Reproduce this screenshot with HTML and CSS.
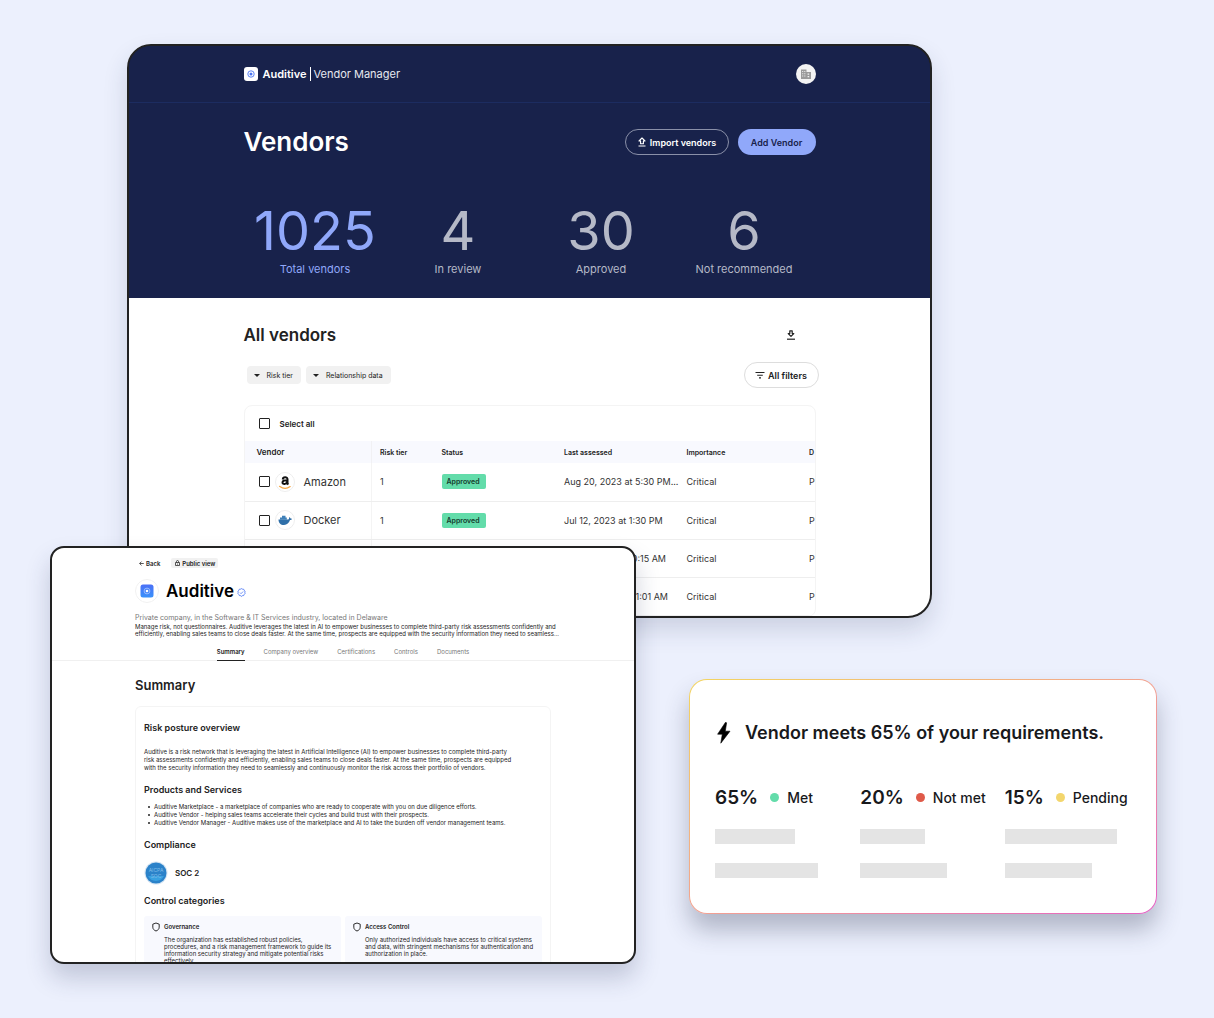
FILE: index.html
```html
<!DOCTYPE html>
<html lang="en">
<head>
<meta charset="utf-8">
<title>Auditive Vendor Manager</title>
<link rel="stylesheet" href="styles.css">
</head>
<body>
<main class="stage">
  <section class="window manager">
    <div class="hero">
      <header class="topbar">
        <div class="wrap topbar-row">
          <svg class="brand-logo" viewBox="0 0 14 14" aria-hidden="true"><rect width="14" height="14" rx="3" fill="#fff"/><circle cx="7" cy="7" r="3.200" fill="none" stroke="#5b83f5" stroke-width="1"/><circle cx="7" cy="7" r="1.500" fill="#4a74f0"/></svg>
          <span class="brand">Auditive</span>
          <span class="product">Vendor Manager</span>
          <button class="avatar" aria-label="Account"><svg viewBox="0 0 12 12" aria-hidden="true"><path fill="#9a9a9a" d="M1 1.500h5.500V4H11v7H1z"/><path fill="#f3f3f3" d="M2.200 3h1v1h-1zM4.300 3h1v1h-1zM2.200 5.200h1v1h-1zM4.300 5.200h1v1h-1zM2.200 7.500h1v1h-1zM4.300 7.500h1v1h-1zM7.600 5.600h1.600v1.200H7.600zM7.600 8h1.600v1.200H7.600z"/></svg></button>
        </div>
      </header>
      <div class="wrap title-row">
        <h1 class="page-title">Vendors</h1>
        <button class="btn btn-outline"><svg viewBox="0 0 10 10" aria-hidden="true"><path d="M5 1 8 4H6.400V6.800H3.600V4H2Z" fill="none" stroke="#fff" stroke-width="1.100" stroke-linejoin="round"/><path d="M1.500 9h7" stroke="#fff" stroke-width="1.200"/></svg>Import vendors</button>
        <button class="btn btn-primary">Add Vendor</button>
      </div>
      <dl class="wrap stats">
        <div class="stat active"><dd>1025</dd><dt>Total vendors</dt></div>
        <div class="stat"><dd>4</dd><dt>In review</dt></div>
        <div class="stat"><dd>30</dd><dt>Approved</dt></div>
        <div class="stat"><dd>6</dd><dt>Not recommended</dt></div>
      </dl>
    </div>
    <div class="wrap listing">
      <div class="listing-head">
        <h2 class="listing-title">All vendors</h2>
        <button class="icon-btn" aria-label="Download"><svg viewBox="0 0 10 10" aria-hidden="true"><path d="M5 6.400 7.800 3.600H6.200V.8H3.800V3.600H2.200Z" fill="none" stroke="#222" stroke-width="1.200" stroke-linejoin="round"/><path d="M1 9.200h8" stroke="#222" stroke-width="1.200"/></svg></button>
      </div>
      <div class="filters">
        <button class="chip"><i class="caret"></i>Risk tier</button>
        <button class="chip"><i class="caret"></i>Relationship data</button>
        <button class="btn btn-filter"><svg viewBox="0 0 10 10" aria-hidden="true"><path d="M.5 2.500h9M2.200 5.200h5.600M4 7.900h2" stroke="#222" stroke-width="1.100"/></svg>All filters</button>
      </div>
      <div class="table-card">
        <label class="select-all"><input type="checkbox" class="tick">Select all</label>
        <table class="vendors">
          <colgroup><col class="c-vendor"><col class="c-risk"><col class="c-mid"><col class="c-mid"><col class="c-mid"><col class="c-mid"></colgroup>
          <thead><tr><th>Vendor</th><th>Risk tier</th><th>Status</th><th>Last assessed</th><th>Importance</th><th>D</th></tr></thead>
          <tbody>
            <tr>
              <td><label class="vendor"><input type="checkbox" class="tick"><svg class="vendor-logo" viewBox="0 0 20 20" aria-hidden="true"><circle cx="10" cy="10" r="9.500" fill="#fff" stroke="#eee"/><path d="M7.800 7.500c.1-3 4.700-2.900 4.700-.3v4.200l.9 1.100M12 8.200c-2.500 0-4.500.4-4.500 2.300 0 2.300 4 2 4.500-.6" fill="none" stroke="#111" stroke-width="2"/><path d="M4.500 14.300c3.500 2.600 7.500 2.600 10.700.3" fill="none" stroke="#f7a845" stroke-width="1.200" stroke-linecap="round"/></svg>Amazon</label></td>
              <td>1</td><td><span class="badge">Approved</span></td><td>Aug 20, 2023 at 5:30 PM...</td><td>Critical</td><td>P</td>
            </tr>
            <tr>
              <td><label class="vendor"><input type="checkbox" class="tick"><svg class="vendor-logo" viewBox="0 0 20 20" aria-hidden="true"><circle cx="10" cy="10" r="9.500" fill="#fff" stroke="#eee"/><path d="M3.500 9.500h9.700c.8-.2 1-.8.900-1.700l.5-.8 1 1.500 1.400.3c-.3 1-1 1.300-2 1.300-1 3-3 4.900-6 4.900-3.500 0-5.500-2-5.500-5.500z" fill="#2f6fa8"/><path d="M5 7.600h6.800v2.100H5zM7 5.800h3.500v2H7z" fill="#3f80b8"/></svg>Docker</label></td>
              <td>1</td><td><span class="badge">Approved</span></td><td>Jul 12, 2023 at 1:30 PM</td><td>Critical</td><td>P</td>
            </tr>
            <tr><td></td><td></td><td></td><td>Jun 9, 2023 at 10:15 AM</td><td>Critical</td><td>P</td></tr>
            <tr><td></td><td></td><td></td><td>Jun 21, 2023 at 11:01 AM</td><td>Critical</td><td>P</td></tr>
          </tbody>
        </table>
      </div>
    </div>
  </section>

  <section class="window profile">
    <div class="column">
      <div class="crumbs">
        <a class="back" href="#"><svg viewBox="0 0 10 10" aria-hidden="true"><path d="M9.500 5h-8M5 1.200 1.200 5 5 8.800" fill="none" stroke="#222" stroke-width="1.500"/></svg>Back</a>
        <button class="public"><svg viewBox="0 0 10 12" aria-hidden="true"><path d="M1 5h8v6H1zM3 5V3a2 2 0 0 1 4 0v2" fill="none" stroke="#222" stroke-width="1.500"/><circle cx="5" cy="8" r="1" fill="#222"/></svg>Public view</button>
      </div>
      <div class="identity">
        <svg class="company-logo" viewBox="0 0 24 24" aria-hidden="true"><defs><linearGradient id="tile" x2="0" y2="1"><stop stop-color="#4a6ff6"/><stop offset="1" stop-color="#3a92fa"/></linearGradient></defs><circle cx="12" cy="12" r="11.500" fill="#fff" stroke="#f1f1f1"/><rect x="5.500" y="5.500" width="13" height="13" rx="2.500" fill="url(#tile)"/><circle cx="12" cy="12" r="2.900" fill="none" stroke="#9fc1ff" stroke-width=".9"/><circle cx="12" cy="12" r="1.300" fill="#fff"/></svg>
        <h1 class="company-name">Auditive</h1>
        <svg class="verified" viewBox="0 0 10 10" aria-hidden="true"><path d="m5 .7 1.100.6 1.300.1.600 1.100.9 1-.2 1.500.2 1.300-.9.900-.6 1.200-1.300.1L5 9.300l-1.100-.8-1.300-.1L2 7.200l-.9-.9L1.300 5l-.2-1.500.9-1 .6-1.100 1.300-.1z" fill="none" stroke="#4f79f5" stroke-width="1"/><path d="M3.300 5.100 4.500 6.300 6.800 3.900" fill="none" stroke="#4f79f5" stroke-width=".9"/></svg>
      </div>
      <p class="tagline">Private company, in the Software &amp; IT Services industry, located in Delaware</p>
      <p class="about">Manage risk, not questionnaires. Auditive leverages the latest in AI to empower businesses to complete third-party risk assessments confidently and<br>efficiently, enabling sales teams to close deals faster. At the same time, prospects are equipped with the security information they need to seamless...</p>
    </div>
    <nav class="tabs">
      <a class="tab current" href="#">Summary</a><a class="tab" href="#">Company overview</a><a class="tab" href="#">Certifications</a><a class="tab" href="#">Controls</a><a class="tab" href="#">Documents</a>
    </nav>
    <div class="column">
      <h2 class="section-title">Summary</h2>
      <div class="report">
        <h3>Risk posture overview</h3>
        <p>Auditive is a risk network that is leveraging the latest in Artificial Intelligence (AI) to empower businesses to complete third-party<br>risk assessments confidently and efficiently, enabling sales teams to close deals faster. At the same time, prospects are equipped<br>with the security information they need to seamlessly and continuously monitor the risk across their portfolio of vendors.</p>
        <h3>Products and Services</h3>
        <ul>
          <li>Auditive Marketplace - a marketplace of companies who are ready to cooperate with you on due diligence efforts.</li>
          <li>Auditive Vendor - helping sales teams accelerate their cycles and build trust with their prospects.</li>
          <li>Auditive Vendor Manager - Auditive makes use of the marketplace and AI to take the burden off vendor management teams.</li>
        </ul>
        <h3>Compliance</h3>
        <div class="cert">
          <svg viewBox="0 0 24 24" aria-hidden="true"><circle cx="12" cy="12" r="11.500" fill="#d5e4f2"/><circle cx="12" cy="12" r="10.500" fill="#2b82c9"/><path d="M4 15a9 9 0 0 0 16 0z" fill="#38a0e0"/><text x="12" y="11" text-anchor="middle" class="seal">AICPA</text><text x="12" y="17" text-anchor="middle" class="seal">SOC</text></svg>
          SOC 2
        </div>
        <h3>Control categories</h3>
        <div class="controls">
          <article class="control">
            <svg viewBox="0 0 10 12" aria-hidden="true"><path d="M5 1 9 2.500v3.700C9 8.500 7.400 10.200 5 11 2.600 10.200 1 8.500 1 6.200V2.500z" fill="none" stroke="#222" stroke-width="1.200"/></svg>
            <div><h4>Governance</h4><p>The organization has established robust policies,<br>procedures, and a risk management framework to guide its<br>information security strategy and mitigate potential risks<br>effectively.</p></div>
          </article>
          <article class="control">
            <svg viewBox="0 0 10 12" aria-hidden="true"><path d="M5 1 9 2.500v3.700C9 8.500 7.400 10.200 5 11 2.600 10.200 1 8.500 1 6.200V2.500z" fill="none" stroke="#222" stroke-width="1.200"/></svg>
            <div><h4>Access Control</h4><p>Only authorized individuals have access to critical systems<br>and data, with stringent mechanisms for authentication and<br>authorization in place.</p></div>
          </article>
        </div>
      </div>
    </div>
  </section>

  <section class="score">
    <h2 class="score-title"><svg viewBox="0 0 16 22" aria-hidden="true"><path d="M10.500.3 2.600 12.200h4.700L5.800 21.200 15 9.200H10.300L11.600.8z" fill="#000" stroke="#000" stroke-width=".6" stroke-linejoin="round"/></svg>Vendor meets 65% of your requirements.</h2>
    <div class="score-grid">
      <div class="score-col"><p class="score-line"><strong>65%</strong><i class="dot met"></i>Met</p><div class="bar" style="width:55%"></div><div class="bar" style="width:71%"></div></div>
      <div class="score-col"><p class="score-line"><strong>20%</strong><i class="dot not-met"></i>Not met</p><div class="bar" style="width:45%"></div><div class="bar" style="width:60%"></div></div>
      <div class="score-col"><p class="score-line"><strong>15%</strong><i class="dot pending"></i>Pending</p><div class="bar" style="width:89%"></div><div class="bar" style="width:69%"></div></div>
    </div>
  </section>
</main>
</body>
</html>
```
FILE: styles.css
```css
* { box-sizing: border-box; }
body { margin: 0; background: #ecf0fd; color: #222; font-family: Inter, "Liberation Sans", sans-serif; }
h1, h2, h3, h4, p, ul, dl, dd { margin: 0; padding: 0; font-weight: 600; }
p, ul, dl, dd { font-weight: 400; }
button { font: inherit; color: inherit; border: 0; margin: 0; padding: 0; background: none; white-space: nowrap; }
a { color: inherit; text-decoration: none; }
svg { display: block; flex: none; }

.stage {
  display: grid;
  height: 100vh;
  grid-template-columns: 50fr 77fr 509fr 53fr 243fr 225fr 57fr;
  grid-template-rows: 44fr 502fr 72fr 61fr 235fr 50fr 54fr;
  overflow: hidden;
}
.window { min-width: 0; min-height: 0; overflow: hidden; background: #fff; border: 2px solid #222; }

/* Vendor manager window */
.manager { grid-area: 2 / 3 / 4 / 6; border-radius: 24px; background: linear-gradient(#18224b 60px, #fff 60px); box-shadow: 0 12px 24px rgba(40, 50, 90, .16); }
.wrap { width: 572px; max-width: 100%; margin: 0 auto; }
.hero { height: 252px; background: #18224b; color: #fff; }
.topbar { border-bottom: 1px solid #1c2c60; }
.topbar-row { display: flex; align-items: center; height: 56px; }
.brand-logo { width: 14px; height: 14px; margin-right: 5px; }
.brand { font-size: 11px; font-weight: 600; padding-right: 3px; }
.product { font-size: 11px; line-height: 14px; padding-left: 3px; border-left: 1px solid #fff; color: #e6e8ef; }
.avatar { display: grid; place-items: center; width: 20px; height: 20px; margin-left: auto; border-radius: 50%; background: #f3f3f3; }
.avatar svg { width: 12px; height: 12px; }
.title-row { display: flex; align-items: center; height: 78px; gap: 9px; }
.page-title { flex: 1; font-size: 26px; line-height: 32px; }
.btn { display: flex; align-items: center; justify-content: center; height: 26px; border-radius: 13px; font-size: 9px; font-weight: 600; }
.btn svg { width: 10px; height: 10px; margin-right: 3px; }
.btn-outline { width: 104px; border: 1px solid #8a90a8; }
.btn-primary { width: 78px; background: #90a8fa; color: #18224b; }
.stats { display: grid; grid-template-columns: repeat(4, 1fr); padding-top: 20px; }
.stat { display: flex; flex-direction: column; align-items: center; color: #b5b9c7; }
.stat dd { font-size: 54px; line-height: 60px; }
.stat dt { font-size: 11px; line-height: 16px; }
.stat.active { color: #90a8fa; }

.listing { padding-top: 25px; }
.listing-head { display: flex; align-items: center; justify-content: space-between; height: 24px; padding-right: 20px; }
.listing-title { font-size: 17px; }
.icon-btn svg { width: 10px; height: 10px; }
.filters { display: flex; align-items: center; gap: 5px; height: 26px; margin: 15px -3px 17px 3px; }
.chip { display: flex; align-items: center; height: 18px; padding: 0 8px 0 7px; border-radius: 4px; background: #f1f1f1; font-size: 7px; }
.caret { width: 0; border: 3px solid transparent; border-top: 3px solid #222; border-bottom: 0; margin-right: 7px; }
.btn-filter { width: 75px; margin-left: auto; border: 1px solid #ddd; }
.table-card { overflow: hidden; border: 1px solid #f4f4f4; border-radius: 8px; }
.select-all { display: flex; align-items: center; height: 35px; padding-left: 14px; gap: 10px; font-size: 8px; font-weight: 600; }
.tick { appearance: none; width: 11px; height: 11px; margin: 0; border: 1px solid #222; border-radius: 1px; background: #fff; }
.vendors { width: 680px; margin-left: -1px; table-layout: fixed; border-collapse: collapse; font-size: 9px; }
.c-vendor { width: 128px; }
.c-risk { width: 62px; }
.vendors th { height: 22px; padding: 0 0 0 8px; text-align: left; font-size: 7px; font-weight: 600; background: #f8f9fe; }
.vendors td { height: 38px; padding: 0 0 0 8px; border-bottom: 1px solid #eee; white-space: nowrap; color: #333; }
.vendors th:first-child { padding-left: 13px; font-size: 8px; border-right: 1px solid #f1f1f4; }
.vendors td:first-child { padding-left: 15px; border-right: 1px solid #f4f4f4; }
.vendor { display: flex; align-items: center; font-size: 11px; }
.vendor-logo { width: 20px; height: 20px; margin: 0 9px 0 5px; }
.badge { display: inline-block; padding: 0 6px 0 5px; border-radius: 2px; background: #63dcaa; font-size: 7px; line-height: 15px; font-weight: 600; color: #163a2c; }

/* Company profile window */
.profile { grid-area: 3 / 2 / 7 / 4; z-index: 1; border-radius: 14px; box-shadow: 0 14px 24px rgba(40, 50, 90, .22); }
.column { width: 416px; max-width: 100%; margin: 0 auto; white-space: nowrap; }
.crumbs { display: flex; align-items: center; gap: 11px; padding: 10px 0 0 4px; font-size: 6px; font-weight: 600; }
.back { display: flex; align-items: center; gap: 2px; }
.back svg { width: 5px; height: 5px; }
.public { display: flex; align-items: center; gap: 2px; height: 10px; padding: 0 3px 0 4px; background: #f1f1f1; border-radius: 2px; }
.public svg { width: 5px; height: 6px; }
.identity { display: flex; align-items: center; height: 24px; margin-top: 11px; color: #000; }
.company-logo { width: 24px; height: 24px; margin-right: 7px; }
.company-name { font-size: 17px; }
.verified { width: 9px; height: 9px; margin: 2px 0 0 3px; }
.tagline { margin-top: 10px; font-size: 7px; line-height: 9px; color: #777; }
.about { font-size: 6px; line-height: 7px; margin-top: 1px; }
.tabs { display: flex; justify-content: center; gap: 19px; margin-top: 9px; border-bottom: 1px solid #f0f0f0; font-size: 6px; line-height: 12px; color: #777; }
.tab { padding-bottom: 2px; }
.tab.current { font-weight: 600; color: #222; box-shadow: 0 1px 0 #222; }
.section-title { margin-top: 15px; font-size: 13px; line-height: 18px; }
.report { margin-top: 12px; padding: 14px 8px 0; border: 1px solid #f4f4f4; border-radius: 6px; font-size: 6px; line-height: 8px; }
.report h3 { font-size: 9px; line-height: 14px; }
.report p { margin: 13px 0 11px; }
.report ul { margin: 6px 0 11px; padding-left: 4px; list-style: none; }
.report li { display: flex; align-items: center; gap: 4px; }
.report li::before { content: ""; width: 2px; height: 2px; border-radius: 50%; background: #222; }
.cert { display: flex; align-items: center; gap: 7px; margin: 9px 0; font-size: 8px; font-weight: 600; }
.cert svg { width: 24px; height: 24px; }
.seal { font-size: 5px; font-weight: 400; fill: #7dbbe8; }
.controls { display: grid; grid-template-columns: 1fr 1fr; gap: 4px; margin-top: 8px; }
.report .control { display: flex; gap: 4px; height: 60px; padding: 6px 8px; border-radius: 3px; background: #f8f9fe; }
.report .control svg { width: 8px; height: 10px; }
.report .control h4 { font-size: 6px; line-height: 10px; }
.report .control p { margin: 4px 0; line-height: 7px; }

/* Requirements card */
.score {
  grid-area: 5 / 5 / 6 / 7;
  min-width: 0;
  padding: 40px 25px 0;
  border: 1px solid transparent;
  border-radius: 18px;
  background: linear-gradient(#fff, #fff) padding-box, linear-gradient(to bottom right, #f3d55f, #f2a391 50%, #e561c4) border-box;
  box-shadow: 0 16px 24px rgba(40, 45, 75, .3);
  color: #18191c;
}
.score-title { display: flex; align-items: center; gap: 14px; font-size: 18px; line-height: 26px; white-space: nowrap; }
.score-title svg { width: 16px; height: 22px; }
.score-grid { display: grid; grid-template-columns: 145fr 144fr 126fr; margin-top: 38px; }
.score-line { display: flex; align-items: center; height: 26px; margin-bottom: 19px; font-size: 14px; font-weight: 500; white-space: nowrap; }
.score-line strong { font-size: 19px; font-weight: 600; }
.dot { width: 9px; height: 9px; margin: 0 8px 0 12px; border-radius: 50%; }
.met { background: #63dcaa; }
.not-met { background: #df5a49; }
.pending { background: #f3d66d; }
.bar { height: 15px; margin-bottom: 19px; background: #e4e4e4; }
```
